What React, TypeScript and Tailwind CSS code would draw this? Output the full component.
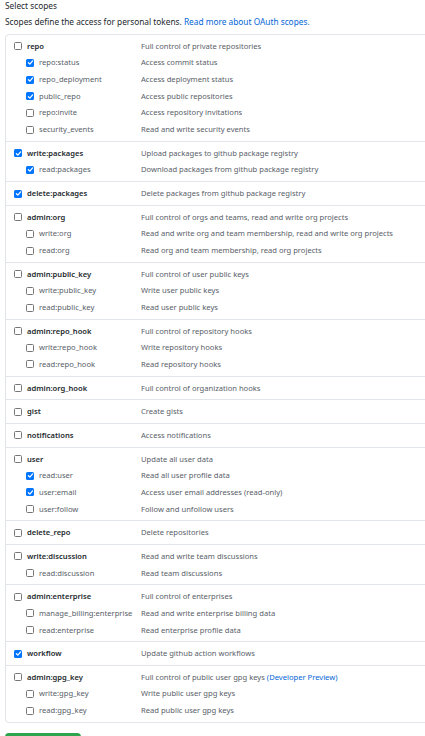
import React from 'react';

type Scope = { name: string; desc: string; checked?: boolean; preview?: boolean };
type Group = { parent: Scope; children?: Scope[] };

const groups: Group[] = [
  {
    parent: { name: 'repo', desc: 'Full control of private repositories' },
    children: [
      { name: 'repo:status', desc: 'Access commit status', checked: true },
      { name: 'repo_deployment', desc: 'Access deployment status', checked: true },
      { name: 'public_repo', desc: 'Access public repositories', checked: true },
      { name: 'repo:invite', desc: 'Access repository invitations' },
      { name: 'security_events', desc: 'Read and write security events' },
    ],
  },
  {
    parent: { name: 'write:packages', desc: 'Upload packages to github package registry', checked: true },
    children: [{ name: 'read:packages', desc: 'Download packages from github package registry', checked: true }],
  },
  { parent: { name: 'delete:packages', desc: 'Delete packages from github package registry', checked: true } },
  {
    parent: { name: 'admin:org', desc: 'Full control of orgs and teams, read and write org projects' },
    children: [
      { name: 'write:org', desc: 'Read and write org and team membership, read and write org projects' },
      { name: 'read:org', desc: 'Read org and team membership, read org projects' },
    ],
  },
  {
    parent: { name: 'admin:public_key', desc: 'Full control of user public keys' },
    children: [
      { name: 'write:public_key', desc: 'Write user public keys' },
      { name: 'read:public_key', desc: 'Read user public keys' },
    ],
  },
  {
    parent: { name: 'admin:repo_hook', desc: 'Full control of repository hooks' },
    children: [
      { name: 'write:repo_hook', desc: 'Write repository hooks' },
      { name: 'read:repo_hook', desc: 'Read repository hooks' },
    ],
  },
  { parent: { name: 'admin:org_hook', desc: 'Full control of organization hooks' } },
  { parent: { name: 'gist', desc: 'Create gists' } },
  { parent: { name: 'notifications', desc: 'Access notifications' } },
  {
    parent: { name: 'user', desc: 'Update all user data' },
    children: [
      { name: 'read:user', desc: 'Read all user profile data', checked: true },
      { name: 'user:email', desc: 'Access user email addresses (read-only)', checked: true },
      { name: 'user:follow', desc: 'Follow and unfollow users' },
    ],
  },
  { parent: { name: 'delete_repo', desc: 'Delete repositories' } },
  {
    parent: { name: 'write:discussion', desc: 'Read and write team discussions' },
    children: [{ name: 'read:discussion', desc: 'Read team discussions' }],
  },
  {
    parent: { name: 'admin:enterprise', desc: 'Full control of enterprises' },
    children: [
      { name: 'manage_billing:enterprise', desc: 'Read and write enterprise billing data' },
      { name: 'read:enterprise', desc: 'Read enterprise profile data' },
    ],
  },
  { parent: { name: 'workflow', desc: 'Update github action workflows', checked: true } },
  {
    parent: { name: 'admin:gpg_key', desc: 'Full control of public user gpg keys', preview: true },
    children: [
      { name: 'write:gpg_key', desc: 'Write public user gpg keys' },
      { name: 'read:gpg_key', desc: 'Read public user gpg keys' },
    ],
  },
];

const Box = ({ checked }: { checked?: boolean }) =>
  checked ? (
    <span className="flex h-[8px] w-[8px] shrink-0 items-center justify-center rounded-[1.5px] bg-[#0075ff]">
      <svg viewBox="0 0 10 10" className="h-[7px] w-[7px]">
        <path d="M2 5.3 L4.1 7.3 L8 2.8" fill="none" stroke="#fff" strokeWidth="1.8" strokeLinecap="round" strokeLinejoin="round" />
      </svg>
    </span>
  ) : (
    <span className="h-[8px] w-[8px] shrink-0 rounded-[1.5px] border border-[#767676] bg-white" />
  );

const Row = ({ scope, sub }: { scope: Scope; sub?: boolean }) => (
  <div className="flex h-[16.67px] items-center">
    <div className={sub ? 'flex w-[127px] items-center gap-[5px] pl-[12px]' : 'flex w-[127px] items-center gap-[5px]'}>
      <Box checked={scope.checked} />
      <span className={sub ? 'whitespace-nowrap text-[#586069]' : 'whitespace-nowrap font-semibold text-[#24292e]'}>
        {scope.name}
      </span>
    </div>
    <span className="whitespace-nowrap text-[#586069]">
      {scope.desc}
      {scope.preview && <span className="text-[#0366d6]"> (Developer Preview)</span>}
    </span>
  </div>
);

export default function App() {
  return (
    <div
      className="w-[425px] overflow-hidden bg-white pl-[5px] pt-[1px]"
      style={{ fontFamily: '"Noto Sans", "Open Sans", sans-serif' }}
    >
      <div className="text-[8.3px] leading-[10px] text-[#24292e]">Select scopes</div>
      <p className="mt-[4px] text-[8.3px] leading-[13px] text-[#24292e]">
        Scopes define the access for personal tokens.{' '}
        <a className="text-[#0366d6]">Read more about OAuth scopes.</a>
      </p>
      <div className="mt-[6px] w-[520px] rounded-[4px] border border-[#e1e4e8] text-[7.6px] leading-[11px]">
        {groups.map((g) => (
          <div key={g.parent.name} className="border-b border-[#e1e4e8] py-[3px] pl-[8px] last:border-b-0">
            <Row scope={g.parent} />
            {g.children?.map((c) => <Row key={c.name} scope={c} sub />)}
          </div>
        ))}
      </div>
      <div className="mt-[10px] h-[22px] w-[76px] rounded-[4px] bg-[#2ea44f]" />
    </div>
  );
}
